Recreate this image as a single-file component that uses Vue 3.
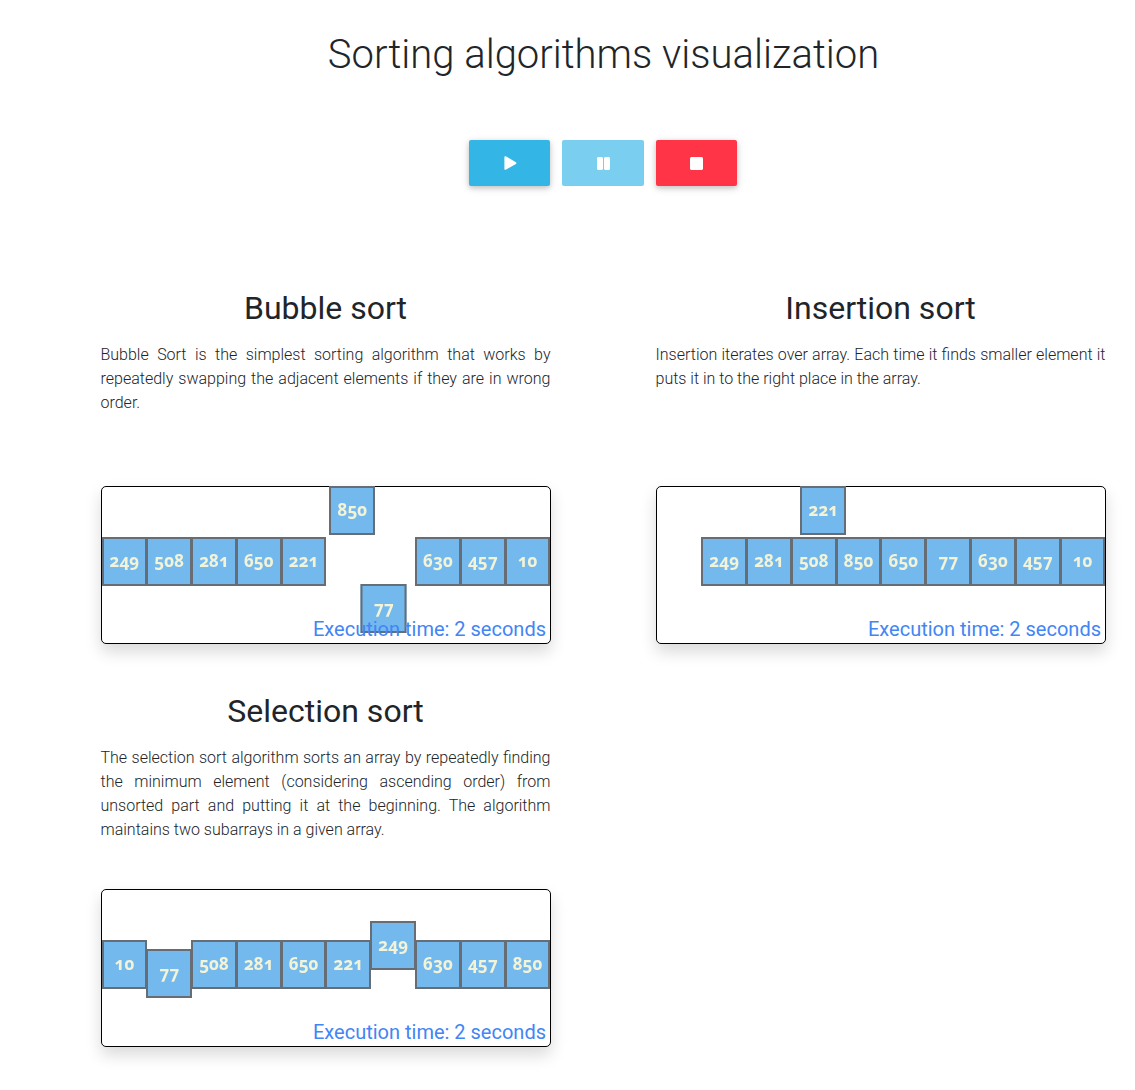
<template>
  <div class="page">
    <h1 class="title">Sorting algorithms visualization</h1>

    <div class="controls">
      <button class="btn play">
        <svg viewBox="0 0 14 16" width="13" height="14"><path d="M1.600 .3 13.200 7c.8.500.8 1.500 0 2L1.600 15.700C.8 16.100 0 15.600 0 14.800V1.200C0 .4 .8-.1 1.600 .3z" /></svg>
      </button>
      <button class="btn pause">
        <svg viewBox="0 0 13 13" width="13" height="13"><path d="M1.500 0h3C5.300 0 6 .7 6 1.500v10C6 12.300 5.300 13 4.500 13h-3C.7 13 0 12.300 0 11.500v-10C0 .7 .7 0 1.500 0zM8.500 0h3c.8 0 1.500.7 1.500 1.500v10c0 .8-.7 1.500-1.500 1.500h-3C7.700 13 7 12.300 7 11.500v-10C7 .7 7.700 0 8.500 0z" /></svg>
      </button>
      <button class="btn stop">
        <svg viewBox="0 0 13 13" width="13" height="13"><path d="M1.500 0h10c.8 0 1.500.7 1.500 1.500v10c0 .8-.7 1.500-1.500 1.500h-10C.7 13 0 12.300 0 11.500v-10C0 .7 .7 0 1.500 0z" /></svg>
      </button>
    </div>

    <div class="grid">
      <section v-for="algo in algorithms" :key="algo.name" class="algo">
        <h2>{{ algo.name }}</h2>
        <p>{{ algo.text }}</p>
        <div class="card">
          <div class="bars" :style="{ paddingLeft: algo.indent + 'px' }">
            <div
              v-for="cell in algo.cells"
              :key="cell.v"
              class="cell"
              :style="{ transform: `translate(${cell.x || 0}px, ${cell.y || 0}px)` }"
            >
              {{ cell.v }}
            </div>
          </div>
          <span class="time">Execution time: 2 seconds</span>
        </div>
      </section>
    </div>
  </div>
</template>

<script setup>
const algorithms = [
  {
    name: "Bubble sort",
    text: "Bubble Sort is the simplest sorting algorithm that works by repeatedly swapping the adjacent elements if they are in wrong order.",
    indent: 0,
    cells: [
      { v: 249 },
      { v: 508 },
      { v: 281 },
      { v: 650 },
      { v: 221 },
      { v: 850, x: 4, y: -51 },
      { v: 77, x: -9.500, y: 47 },
      { v: 630 },
      { v: 457 },
      { v: 10 },
    ],
  },
  {
    name: "Insertion sort",
    text: "Insertion iterates over array. Each time it finds smaller element it puts it in to the right place in the array.",
    indent: 44.8,
    cells: [
      { v: 249 },
      { v: 281 },
      { v: 508 },
      { v: 850 },
      { v: 650 },
      { v: 77 },
      { v: 630 },
      { v: 457 },
      { v: 10 },
      { v: 221, x: -304, y: -51 },
    ],
  },
  {
    name: "Selection sort",
    text: "The selection sort algorithm sorts an array by repeatedly finding the minimum element (considering ascending order) from unsorted part and putting it at the beginning. The algorithm maintains two subarrays in a given array.",
    indent: 0,
    cells: [
      { v: 10 },
      { v: 77, y: 9 },
      { v: 508 },
      { v: 281 },
      { v: 650 },
      { v: 221 },
      { v: 249, y: -19 },
      { v: 630 },
      { v: 457 },
      { v: 850 },
    ],
  },
];
</script>

<style>
html,
body {
  background: #fff;
}
</style>

<style scoped>
.page {
  width: 1005px;
  margin-left: 100.5px;
  padding-bottom: 43px;
  font-family: Roboto, "Liberation Sans", sans-serif;
  color: #212529;
}
.title {
  margin: 0;
  padding: 31px 0 0 1px;
  height: 110px;
  box-sizing: border-box;
  font-size: 40px;
  line-height: 48px;
  font-weight: 300;
  text-align: center;
}
.controls {
  display: flex;
  justify-content: center;
  gap: 12px;
  height: 46px;
  margin-top: 30px;
}
.btn {
  width: 81px;
  height: 46px;
  padding: 0;
  border: none;
  border-radius: 2px;
  display: flex;
  align-items: center;
  justify-content: center;
  box-shadow: 0 2px 5px rgba(0, 0, 0, 0.16), 0 2px 10px rgba(0, 0, 0, 0.12);
}
.btn svg {
  fill: #fff;
}
.play {
  background: #33b5e5;
  padding-left: 2px;
}
.pause {
  width: 82px;
  background: #7acff0;
  box-shadow: none;
}
.stop {
  background: #ff3547;
}
.grid {
  display: grid;
  grid-template-columns: 450px 450px;
  column-gap: 105px;
  row-gap: 45px;
  margin-top: 100px;
  align-items: start;
}
.algo h2 {
  margin: 0;
  padding-top: 3px;
  font-size: 32px;
  line-height: 38px;
  font-weight: 400;
  text-align: center;
}
.algo p {
  margin: 16px 0 0;
  height: 96px;
  font-size: 16px;
  line-height: 24px;
  font-weight: 300;
  text-align: justify;
}
.card {
  position: relative;
  height: 158px;
  margin-top: 47px;
  box-sizing: border-box;
  border: 1px solid #000;
  border-radius: 5px;
  background: #fff;
  box-shadow: 0 8px 16px rgba(0, 0, 0, 0.15);
}
.bars {
  display: flex;
  padding-top: 50px;
}
.cell {
  flex: none;
  width: 45.8px;
  height: 49px;
  margin-right: -1px;
  padding-bottom: 3px;
  box-sizing: border-box;
  border: 2px solid #666d75;
  background: #74b9ee;
  color: #f3f3d8;
  display: flex;
  align-items: center;
  justify-content: center;
  font-family: "Noto Sans", serif;
  font-feature-settings: "onum" 1;
  font-size: 17px;
  font-weight: 700;
  filter: blur(0.5px);
}
.time {
  position: absolute;
  right: 3.5px;
  bottom: 2px;
  font-size: 20px;
  line-height: 24px;
  font-weight: 400;
  color: #4285f4;
}
</style>
